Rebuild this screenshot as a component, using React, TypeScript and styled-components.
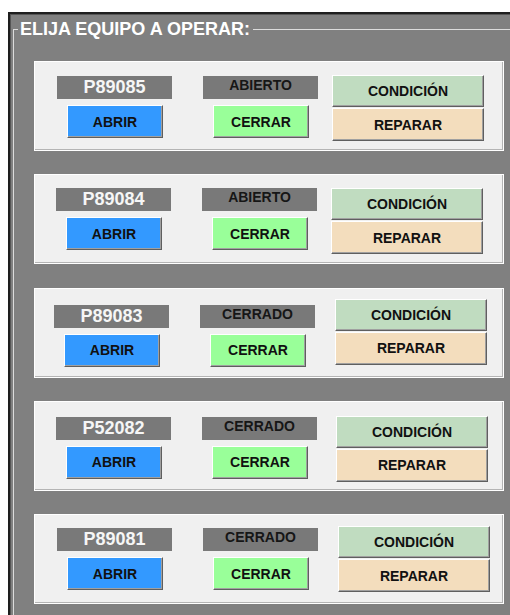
import React from 'react'
import styled, { createGlobalStyle } from 'styled-components'

const GlobalStyle = createGlobalStyle`
    html, body {
        margin: 0;
        padding: 0;
        background: #ffffff;
        overflow: hidden;
    }
`;

const Page = styled.div`
    width: 510px;
    height: 615px;
    overflow: hidden;
    padding: 12px 0 0 8px;
    box-sizing: border-box;
    font-family: "Liberation Sans", Arial, sans-serif;
`;

const Frame = styled.div`
    width: 530px;
    height: 640px;
    box-sizing: border-box;
    background: #808080;
    border-top: 2px solid #1e1e1e;
    border-left: 2px solid #1e1e1e;
    box-shadow: inset 1px 1px 0 #555555;
    padding: 5px 0 0 3px;
`;

const Group = styled.fieldset`
    margin: 0;
    padding: 0 0 0 4px;
    min-width: 0;
    height: 700px;
    border: 1px solid #dcdcdc;
    border-right: none;
    border-bottom: none;
`;

const Title = styled.legend`
    padding: 0 3px 0 2px;
    margin: 0;
    font-size: 18px;
    line-height: 20px;
    font-weight: bold;
    color: #ffffff;
`;

const Stack = styled.div`
    display: flex;
    flex-direction: column;
    gap: 23.25px;
    margin: 22px 0 0 16px;
`;

const Panel = styled.div`
    width: 470px;
    height: 90px;
    box-sizing: border-box;
    display: flex;
    align-items: flex-start;
    background: #f0f0f0;
    border: 1px solid #ffffff;
    box-shadow: inset -1px -1px 0 #b4b4b4;
`;

const Controls = styled.div<{ $x: number; $y: number }>`
    display: flex;
    gap: 31px;
    margin-left: ${p => p.$x}px;
    margin-top: ${p => p.$y}px;
`;

const Column = styled.div`
    display: flex;
    flex-direction: column;
    align-items: flex-start;
    gap: 6px;
`;

const Tag = styled.div<{ $light?: boolean }>`
    width: 115px;
    height: 23px;
    box-sizing: border-box;
    background: #797979;
    text-align: center;
    font-weight: bold;
    color: ${p => (p.$light ? '#f6f6f6' : '#161616')};
    font-size: ${p => (p.$light ? '18px' : '14px')};
    line-height: ${p => (p.$light ? '23px' : '16px')};
    padding-top: ${p => (p.$light ? '0' : '1px')};
`;

const Button = styled.button<{ $bg: string; $w: number; $h: number }>`
    width: ${p => p.$w}px;
    height: ${p => p.$h}px;
    margin: 0;
    padding: 0;
    box-sizing: border-box;
    background: ${p => p.$bg};
    border: 1px solid;
    border-color: #ffffff #5f5f5f #5f5f5f #ffffff;
    box-shadow: inset -1px -1px 0 #a0a0a0;
    font-family: "Liberation Sans", Arial, sans-serif;
    font-size: 14px;
    font-weight: bold;
    color: #111111;
    cursor: pointer;
`;

const Side = styled(Button)`
    margin-left: 10px;
`;

const Actions = styled.div<{ $x: number; $y: number }>`
    display: flex;
    flex-direction: column;
    gap: 1px;
    margin-left: ${p => p.$x}px;
    margin-top: ${p => p.$y}px;
`;

type Unit = {
    id: string;
    status: string;
    lx: number;
    ly: number;
    rx: number;
    ry: number;
}

// offsets measured from each panel's outer edge
const units: Unit[] = [
    { id: 'P89085', status: 'ABIERTO', lx: 23, ly: 15, rx: 298, ry: 14 },
    { id: 'P89084', status: 'ABIERTO', lx: 22, ly: 14, rx: 297, ry: 14 },
    { id: 'P89083', status: 'CERRADO', lx: 20, ly: 17, rx: 301, ry: 11 },
    { id: 'P52082', status: 'CERRADO', lx: 22, ly: 16, rx: 302, ry: 15 },
    { id: 'P89081', status: 'CERRADO', lx: 23, ly: 14, rx: 304, ry: 12 },
];

const UnitPanel: React.FC<{ unit: Unit }> = ({ unit }) => {
    return (
        <Panel>
            <Controls $x={unit.lx - 1} $y={unit.ly - 1}>
                <Column>
                    <Tag $light>{unit.id}</Tag>
                    <Side $bg="#3399ff" $w={96} $h={33}>ABRIR</Side>
                </Column>
                <Column>
                    <Tag>{unit.status}</Tag>
                    <Side $bg="#99ff99" $w={96} $h={33}>CERRAR</Side>
                </Column>
            </Controls>
            <Actions $x={unit.rx - unit.lx - 261} $y={unit.ry - 1}>
                <Button $bg="#c0dcc0" $w={152} $h={32}>CONDICIÓN</Button>
                <Button $bg="#f3ddbd" $w={152} $h={33}>REPARAR</Button>
            </Actions>
        </Panel>
    )
}

const App: React.FC = () => {
    return (
        <Page>
            <GlobalStyle />
            <Frame>
                <Group>
                    <Title>ELIJA EQUIPO A OPERAR:</Title>
                    <Stack>
                        { units.map(unit => <UnitPanel unit={unit} key={unit.id} />) }
                    </Stack>
                </Group>
            </Frame>
        </Page>
    )
}

export default App
